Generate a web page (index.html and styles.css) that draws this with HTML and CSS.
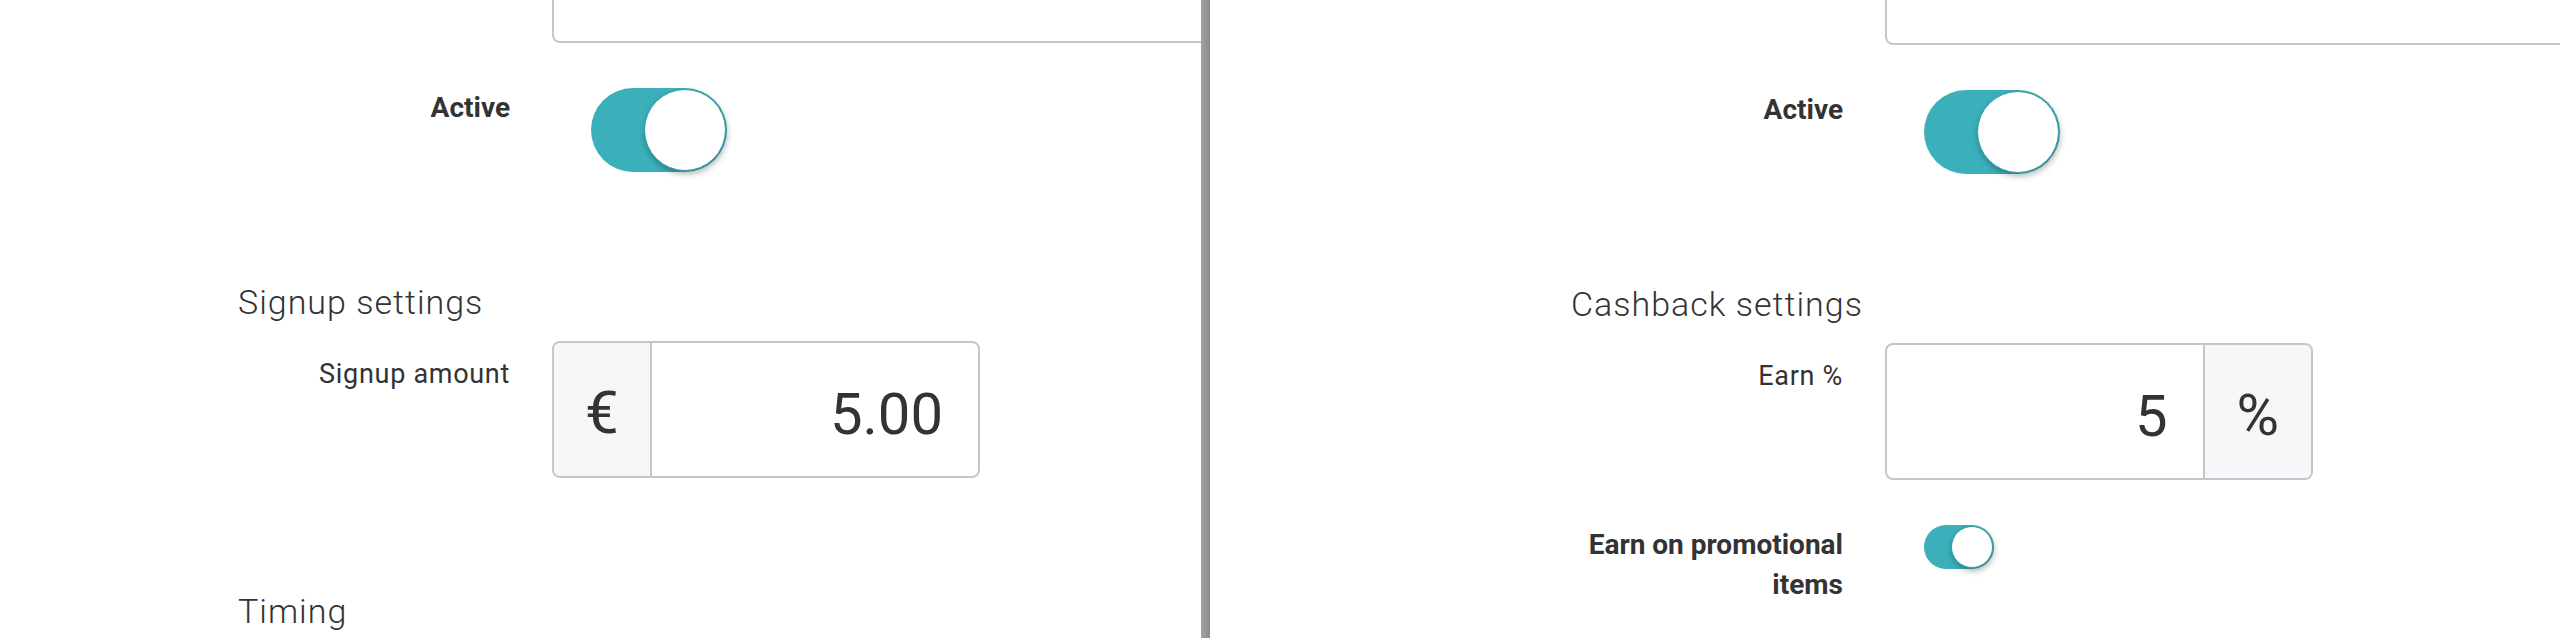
FILE: index.html
```html
<!DOCTYPE html>
<html lang="en">
<head>
<meta charset="utf-8">
<title>Loyalty settings</title>
<link rel="stylesheet" href="styles.css">
</head>
<body>
<div class="screen">
  <section class="panel panel-left">
    <div class="form-row row-stub">
      <div class="label"></div>
      <div class="input-stub"></div>
    </div>
    <div class="form-row row-toggle">
      <span class="label label-bold">Active</span>
      <span class="toggle toggle-lg"><span class="knob"></span></span>
    </div>
    <h3 class="section-title">Signup settings</h3>
    <div class="form-row row-input">
      <span class="label label-input">Signup amount</span>
      <div class="input-group">
        <span class="addon">€</span>
        <span class="input-value">5.00</span>
      </div>
    </div>
    <h3 class="section-title title-timing">Timing</h3>
  </section>
  <div class="divider"></div>
  <section class="panel panel-right">
    <div class="form-row row-stub">
      <div class="label"></div>
      <div class="input-stub stub-tall"></div>
    </div>
    <div class="form-row row-toggle">
      <span class="label label-bold">Active</span>
      <span class="toggle toggle-lg"><span class="knob"></span></span>
    </div>
    <h3 class="section-title">Cashback settings</h3>
    <div class="form-row row-input">
      <span class="label label-input">Earn %</span>
      <div class="input-group">
        <span class="input-value">5</span>
        <span class="addon addon-right">%</span>
      </div>
    </div>
    <div class="form-row row-toggle row-promo">
      <span class="label label-bold">Earn on promotional items</span>
      <span class="toggle toggle-sm"><span class="knob"></span></span>
    </div>
  </section>
</div>
</body>
</html>
```
FILE: styles.css
```css
* { box-sizing: border-box; }

html, body {
  margin: 0;
  padding: 0;
  background: #ffffff;
}

body {
  font-family: Roboto, "Liberation Sans", Arial, sans-serif;
  color: #333333;
}

.screen {
  display: flex;
  width: 2560px;
  height: 638px;
  overflow: hidden;
}

.panel {
  height: 638px;
  overflow: hidden;
  flex: none;
}

.panel-left {
  width: 1201px;
  padding-left: 238px;
}

.panel-right {
  width: 1350px;
  padding-left: 361px;
}

.divider {
  flex: none;
  width: 9px;
  height: 638px;
  background: linear-gradient(to right, #a2a2a2, #8c8c8c);
}

.form-row {
  display: grid;
  grid-template-columns: 272px auto;
  column-gap: 42px;
  align-items: start;
}

.label {
  text-align: right;
  font-size: 27px;
  letter-spacing: 0.7px;
  line-height: 40px;
  color: #333333;
}

.label-bold {
  font-weight: 700;
  font-size: 28px;
  letter-spacing: 0;
}

.label-input {
  padding-top: 13px;
}

.input-stub {
  width: 1100px;
  height: 43px;
  border: 2px solid #c4c6cc;
  border-top: none;
  border-radius: 0 0 8px 8px;
}

.stub-tall {
  height: 45px;
}

.row-toggle {
  margin-top: 45px;
}

.toggle {
  display: flex;
  justify-content: flex-end;
  align-items: center;
  margin-left: 39px;
  background: #3cb0ba;
  padding: 1px;
}

.toggle-lg {
  width: 136px;
  height: 84px;
  border-radius: 42px;
}

.toggle-sm {
  width: 70px;
  height: 44px;
  border-radius: 22px;
}

.knob {
  display: block;
  background: #ffffff;
  border: 1px solid #2f9ea8;
  border-radius: 50%;
  box-shadow: 1px 3px 6px rgba(0, 0, 0, 0.3);
}

.toggle-lg .knob {
  width: 82px;
  height: 82px;
}

.toggle-sm .knob {
  width: 42px;
  height: 42px;
}

.section-title {
  margin: 110px 0 0 0;
  font-size: 34px;
  font-weight: 300;
  letter-spacing: 1px;
  line-height: 40px;
  color: #333333;
}

.row-input {
  margin-top: 19px;
}

.input-group {
  display: flex;
  width: 428px;
  height: 137px;
  border: 2px solid #c4c6cc;
  border-radius: 8px;
  overflow: hidden;
}

.addon {
  display: flex;
  align-items: center;
  justify-content: center;
  padding: 6px 31px 0 31px;
  background: #f6f7f9;
  border-right: 2px solid #c4c6cc;
  font-size: 60px;
  color: #333333;
}

.addon-right {
  border-right: none;
  border-left: 2px solid #c4c6cc;
  padding: 6px 32px 0 32px;
  font-size: 58px;
}

.input-value {
  flex: 1;
  display: flex;
  align-items: center;
  justify-content: flex-end;
  padding: 8px 35px 0 0;
  font-size: 58px;
  color: #333333;
}

.title-timing {
  margin-top: 113px;
}

.row-promo {
  margin-top: 45px;
}
```
